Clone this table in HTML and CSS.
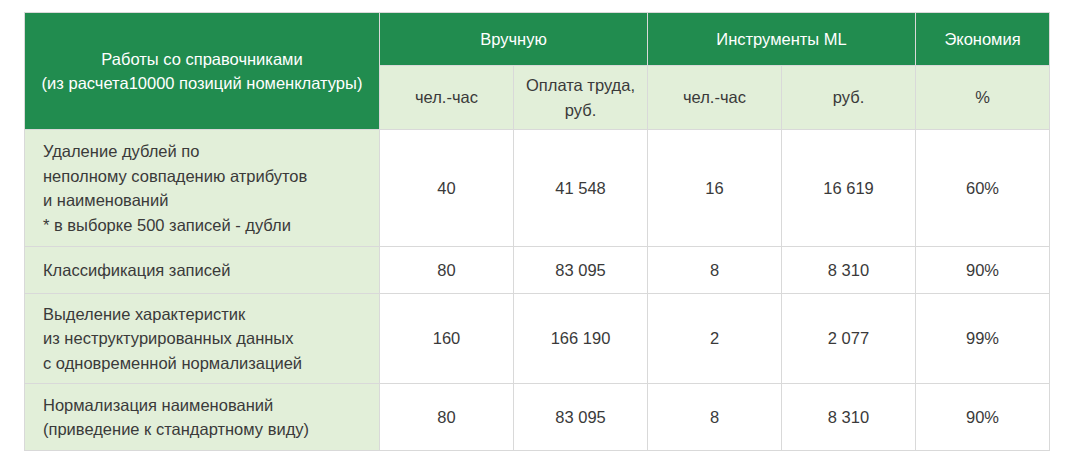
FILE: index.html
```html
<!DOCTYPE html>
<html lang="ru">
<head>
<meta charset="utf-8">
<link rel="stylesheet" href="styles.css">
</head>
<body>
<table class="grid">
  <colgroup>
    <col class="c-name">
    <col class="c-val"><col class="c-val"><col class="c-val"><col class="c-val"><col class="c-val">
  </colgroup>
  <thead>
    <tr class="h1">
      <th class="head name-head" rowspan="2">Работы со справочниками<br>(из расчета10000 позиций номенклатуры)</th>
      <th class="head" colspan="2">Вручную</th>
      <th class="head" colspan="2">Инструменты ML</th>
      <th class="head">Экономия</th>
    </tr>
    <tr class="h2">
      <th class="sub">чел.-час</th>
      <th class="sub">Оплата труда,<br>руб.</th>
      <th class="sub">чел.-час</th>
      <th class="sub">руб.</th>
      <th class="sub">%</th>
    </tr>
  </thead>
  <tbody>
    <tr class="r1">
      <td class="label">Удаление дублей по<br>неполному совпадению атрибутов<br>и наименований<br>* в выборке 500 записей - дубли</td>
      <td>40</td><td>41 548</td><td>16</td><td>16 619</td><td>60%</td>
    </tr>
    <tr class="r2">
      <td class="label">Классификация записей</td>
      <td>80</td><td>83 095</td><td>8</td><td>8 310</td><td>90%</td>
    </tr>
    <tr class="r3">
      <td class="label">Выделение характеристик<br>из неструктурированных данных<br>с одновременной нормализацией</td>
      <td>160</td><td>166 190</td><td>2</td><td>2 077</td><td>99%</td>
    </tr>
    <tr class="r4">
      <td class="label">Нормализация наименований<br>(приведение к стандартному виду)</td>
      <td>80</td><td>83 095</td><td>8</td><td>8 310</td><td>90%</td>
    </tr>
  </tbody>
</table>
</body>
</html>
```
FILE: styles.css
```css
html, body {
  margin: 0;
  padding: 0;
  background: #ffffff;
}
body {
  padding: 12px 0 0 24px;
  font-family: "Liberation Sans", Arial, sans-serif;
  font-size: 16.5px;
  color: #3a3a3a;
}
.grid {
  border-collapse: collapse;
  table-layout: fixed;
  width: 1026px;
}
.c-name { width: 355px; }
.c-val { width: 134px; }
.grid th, .grid td {
  border: 1px solid #d9d9d9;
  padding: 0 6px;
  text-align: center;
  vertical-align: middle;
  line-height: 24.5px;
  font-weight: normal;
}
.head {
  background: #218c4f;
  color: #ffffff;
}
.sub {
  background: #e2efd9;
  color: #3a3a3a;
}
.h1 { height: 53px; }
.h2 { height: 64px; }
.r1 { height: 117px; }
.r2 { height: 47px; }
.r3 { height: 90px; }
.r4 { height: 67px; }
.grid td.label {
  background: #e2efd9;
  text-align: left;
  padding-left: 18px;
}
```
